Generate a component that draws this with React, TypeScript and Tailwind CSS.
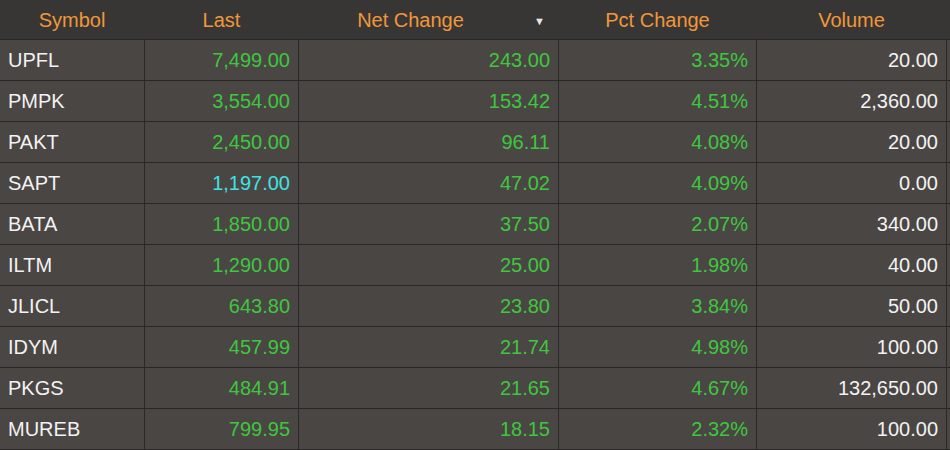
import React from "react";

type Row = { s: string; last: string; net: string; pct: string; vol: string; cyan?: boolean };

const rows: Row[] = [
  { s: "UPFL", last: "7,499.00", net: "243.00", pct: "3.35%", vol: "20.00" },
  { s: "PMPK", last: "3,554.00", net: "153.42", pct: "4.51%", vol: "2,360.00" },
  { s: "PAKT", last: "2,450.00", net: "96.11", pct: "4.08%", vol: "20.00" },
  { s: "SAPT", last: "1,197.00", net: "47.02", pct: "4.09%", vol: "0.00", cyan: true },
  { s: "BATA", last: "1,850.00", net: "37.50", pct: "2.07%", vol: "340.00" },
  { s: "ILTM", last: "1,290.00", net: "25.00", pct: "1.98%", vol: "40.00" },
  { s: "JLICL", last: "643.80", net: "23.80", pct: "3.84%", vol: "50.00" },
  { s: "IDYM", last: "457.99", net: "21.74", pct: "4.98%", vol: "100.00" },
  { s: "PKGS", last: "484.91", net: "21.65", pct: "4.67%", vol: "132,650.00" },
  { s: "MUREB", last: "799.95", net: "18.15", pct: "2.32%", vol: "100.00" },
];

const cols = "grid grid-cols-[144px_153px_259px_197px_189px_1fr]";

export default function App() {
  return (
    <div
      className="w-[950px] h-[450px] overflow-hidden bg-[#2c2a28] text-[20px]"
      style={{ fontFamily: '"Liberation Sans", Arial, sans-serif' }}
    >
      <div className={`${cols} h-[40px] bg-[#383634] text-[#f0973a] gap-x-[1px] border-b border-[#2a2826]`}>
        <div className="flex items-center justify-center">Symbol</div>
        <div className="flex items-center justify-center">Last</div>
        <div className="relative flex items-center justify-center pr-[36px]">
          Net Change
          <span className="absolute right-[13px] top-[13px] text-[11px] text-[#e8e8e8]">▼</span>
        </div>
        <div className="flex items-center justify-center">Pct Change</div>
        <div className="flex items-center justify-center">Volume</div>
        <div className="bg-[#383634]"></div>
      </div>
      {rows.map((r) => (
        <div
          key={r.s}
          className={`${cols} h-[41px] gap-x-[1px] border-b border-[#2a2826] bg-[#2a2826]`}
        >
          <div className="flex items-center pl-[8px] bg-[#4a4644] text-[#f2f2f2]">{r.s}</div>
          <div
            className={`flex items-center justify-end pr-[8px] bg-[#4a4644] ${
              r.cyan ? "text-[#3fe3e3]" : "text-[#3fc63f]"
            }`}
          >
            {r.last}
          </div>
          <div className="flex items-center justify-end pr-[8px] bg-[#4a4644] text-[#3fc63f]">{r.net}</div>
          <div className="flex items-center justify-end pr-[8px] bg-[#4a4644] text-[#3fc63f]">{r.pct}</div>
          <div className="flex items-center justify-end pr-[8px] bg-[#4a4644] text-[#f2f2f2]">{r.vol}</div>
          <div className="bg-[#4a4644]"></div>
        </div>
      ))}
    </div>
  );
}
